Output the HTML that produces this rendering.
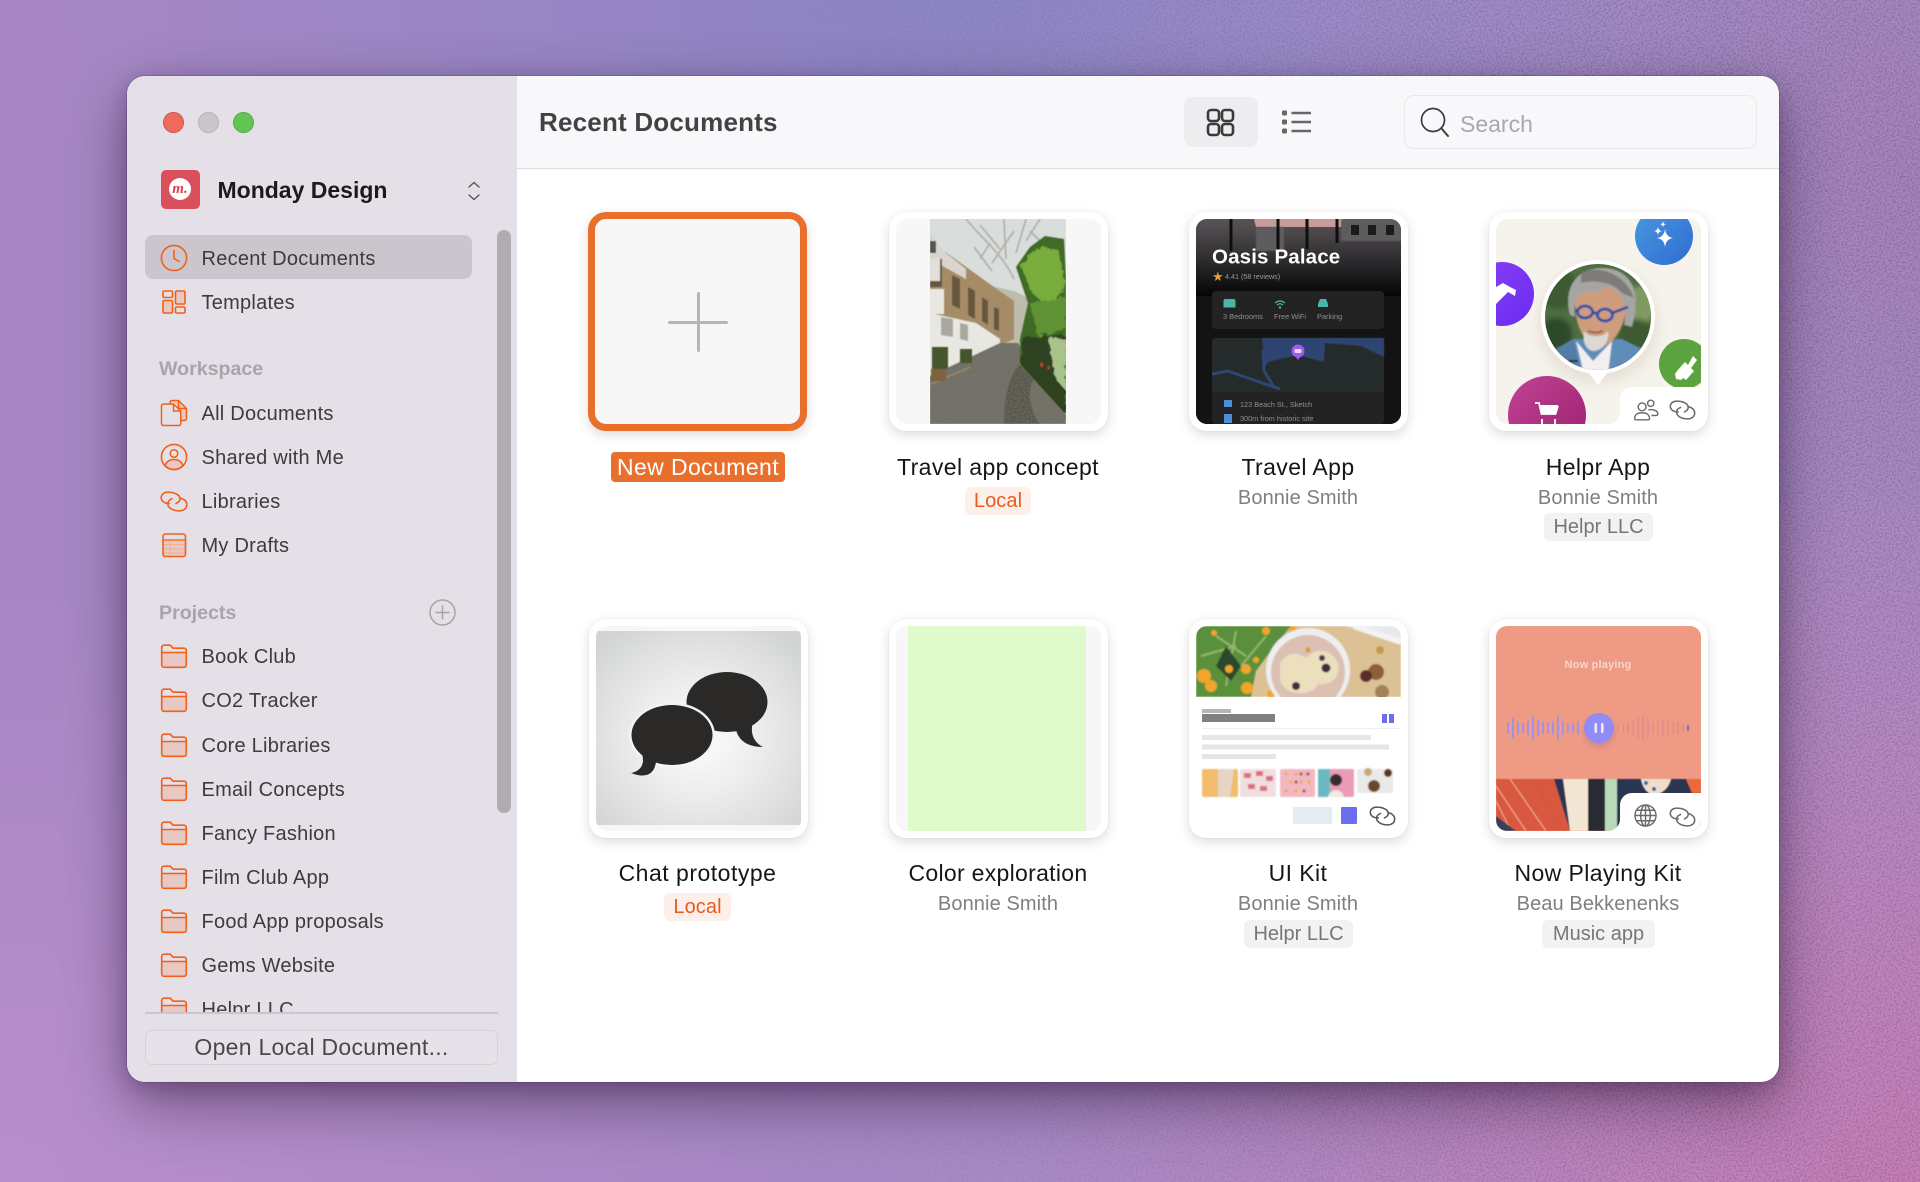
<!DOCTYPE html>
<html><head><meta charset="utf-8"><title>Recent Documents</title>
<style>
html,body{margin:0;padding:0;width:1920px;height:1182px;overflow:hidden;font-family:"Liberation Sans",sans-serif}
body{position:relative;background:
 radial-gradient(900px 420px at 50% 0,#8a83c4 0,rgba(138,131,196,0) 100%),
 radial-gradient(900px 700px at 100% 100%,#c076b2 0,rgba(192,118,178,0) 100%),
 radial-gradient(800px 600px at 0 100%,#b88ecb 0,rgba(184,142,203,0) 100%),
 radial-gradient(700px 600px at 100% 15%,#9c7ab6 0,rgba(156,122,182,0) 100%),
 #a687c4}
div{box-sizing:border-box}
.a{position:absolute}
#noise{position:absolute;left:0;top:0;width:1920px;height:1182px;opacity:.08;-webkit-mask-image:linear-gradient(to right,transparent 35%,#000 85%);mask-image:linear-gradient(to right,transparent 35%,#000 85%)}
#win{position:absolute;left:127px;top:76px;width:1652px;height:1006px;border-radius:18px;background:#fff;box-shadow:0 0 0 1px rgba(70,50,90,.28),0 22px 60px rgba(20,0,30,.42),0 6px 20px rgba(20,0,30,.2);overflow:hidden}
#side{position:absolute;left:0;top:0;width:390px;height:1006px;background:#e5dfe7}
#head{position:absolute;left:390px;top:0;width:1262px;height:93px;background:#f8f8fa;border-bottom:1px solid #dfdfe0;box-shadow:0 1px 1px rgba(0,0,0,.03)}
.r{position:absolute;left:201.5px;margin-top:1px;height:30px;line-height:30px;font-size:20px;letter-spacing:.25px;color:#3d3a40;white-space:nowrap}
.h{position:absolute;left:159px;margin-top:1px;height:30px;line-height:30px;font-size:19.6px;font-weight:bold;color:#a9a4ac;white-space:nowrap}
.ic{position:absolute;left:160px;width:28px;height:28px;overflow:visible}
.card{position:absolute;width:219px;height:219px;background:#fff;border-radius:17px;box-shadow:0 0 1px rgba(0,0,0,.12),0 4px 12px rgba(0,0,0,.14)}
.th{position:absolute;left:7px;top:7px;width:205px;height:205px;border-radius:11px;overflow:hidden;background:#f7f7f7}
.th svg{display:block}
.ti{position:absolute;width:300px;text-align:center;height:30px;line-height:30px;font-size:23px;letter-spacing:.4px;color:#161616;white-space:nowrap}
.au{position:absolute;width:300px;margin-top:1px;text-align:center;height:28px;line-height:28px;font-size:20px;letter-spacing:.1px;color:#7f7f81;white-space:nowrap}
.tg{position:absolute;height:28px;line-height:29px;text-align:center;font-size:20px;border-radius:6px;background:#f2f2f3;color:#77777a;white-space:nowrap}
.lc{background:#fdf0ea;color:#ea5a1c;letter-spacing:.1px}
</style></head><body>
<svg id="noise" xmlns="http://www.w3.org/2000/svg"><filter id="n" x="0" y="0" width="100%" height="100%"><feTurbulence type="fractalNoise" baseFrequency=".55" numOctaves="2"/><feColorMatrix values="5 0 0 0 -2 5 0 0 0 -2 5 0 0 0 -2 0 0 0 0 1"/></filter><rect width="1920" height="1182" filter="url(#n)"/></svg>

<svg width="0" height="0" style="position:absolute"><defs>
<symbol id="folder" viewBox="0 0 28 28"><path d="M1.700 10.500H26.300V23a2.300 2.300 0 0 1-2.300 2.300H4A2.300 2.300 0 0 1 1.700 23Z" fill="#e8c8c3"/><path d="M1.700 10.500H26.300M1.700 23V5.500A2.300 2.300 0 0 1 4 3.200H10.300L13 6.200H24A2.300 2.300 0 0 1 26.300 8.500V23A2.300 2.300 0 0 1 24 25.300H4A2.300 2.300 0 0 1 1.700 23Z" fill="none" stroke="#ef6119" stroke-width="1.600" stroke-linejoin="round"/></symbol>
<symbol id="link" viewBox="0 0 28 21"><path d="M9.500 12.500C4.500 12.500 1.200 10 1.200 6.800 1.200 3.500 4 1.200 8 1.200 13.500 1.200 20 3.400 20 7.800 20 9.800 18.300 11.500 16 12.500M20 7C24 7.800 26.800 10.300 26.800 13.600 26.800 17.500 23.500 19.800 19.500 19.800 13.800 19.800 7.800 17.400 7.800 12.900 7.800 10.500 9.700 8.600 12 7.800" fill="none" stroke="currentColor" stroke-width="1.600" stroke-linecap="round"/></symbol>
</defs></svg>

<div id="win"><div id="side"></div><div id="head"></div></div>

<!-- traffic lights -->
<div class="a" style="left:162.500px;top:112px;width:21px;height:21px;border-radius:50%;background:#ee6a5f;box-shadow:inset 0 0 0 1px #d9584f"></div>
<div class="a" style="left:197.500px;top:112px;width:21px;height:21px;border-radius:50%;background:#cbc6cc;box-shadow:inset 0 0 0 1px #b8b3b9"></div>
<div class="a" style="left:232.500px;top:112px;width:21px;height:21px;border-radius:50%;background:#61c554;box-shadow:inset 0 0 0 1px #55b24a"></div>

<!-- logo -->
<div class="a" style="left:161px;top:170px;width:39px;height:39px;border-radius:5px;background:#d94f5b"></div>
<div class="a" style="left:169px;top:178px;width:22px;height:22px;border-radius:50%;background:#fff;text-align:center;font:italic bold 15px/22px 'Liberation Serif',serif;color:#d8404f">m.</div>
<div class="a" style="left:217.500px;top:175px;height:30px;line-height:30px;font-size:23px;font-weight:bold;color:#1b1a1d;white-space:nowrap">Monday Design</div>
<svg class="a" style="left:467px;top:180px" width="14" height="22" viewBox="0 0 14 22"><path d="M2 7 7 2.500 12 7M2 15 7 19.500 12 15" fill="none" stroke="#5c5a60" stroke-width="1.500" stroke-linecap="round" stroke-linejoin="round"/></svg>

<!-- sidebar selection + scrollbar -->
<div class="a" style="left:145px;top:235px;width:327px;height:44px;border-radius:8px;background:#cbc6cd"></div>
<div class="a" style="left:497px;top:230px;width:14px;height:583px;border-radius:7px;background:#b0abb1"></div>

<!-- sidebar top items -->
<svg class="ic" style="top:243.500px" viewBox="0 0 28 28"><circle cx="14" cy="14" r="12.600" fill="none" stroke="#ef6119" stroke-width="1.600"/><path d="M14 6.500V14.500L19 17.500" fill="none" stroke="#ef6119" stroke-width="1.600" stroke-linecap="round" stroke-linejoin="round"/></svg>
<div class="r" style="top:242.500px">Recent Documents</div>
<svg class="ic" style="top:287.500px" viewBox="0 0 28 28"><g stroke="#ef6119" stroke-width="1.600"><rect x="3" y="3" width="9.500" height="6.500" rx="1.200" fill="none"/><rect x="15.500" y="3" width="9.500" height="13" rx="1.200" fill="#e8c8c3"/><rect x="3" y="12.500" width="9.500" height="12.500" rx="1.200" fill="#e8c8c3"/><rect x="15.500" y="19" width="9.500" height="6" rx="1.200" fill="none"/></g></svg>
<div class="r" style="top:286.500px">Templates</div>

<div class="h" style="top:353px">Workspace</div>
<svg class="ic" style="top:398.500px" viewBox="0 0 28 28"><path d="M11 2h7l8 7v11a2 2 0 0 1-2 2h-3V10l-6-6h-4Z" fill="#e8c8c3"/><path d="M10 5V3.500A2 2 0 0 1 12 1.500H18.500L26.500 9.500V19.500A2 2 0 0 1 24.500 21.500H21M18.500 1.500V9.500H26.500" fill="none" stroke="#ef6119" stroke-width="1.500" stroke-linejoin="round"/><path d="M3.500 5H13.500L20.800 12V24.500A2 2 0 0 1 18.800 26.500H3.500A2 2 0 0 1 1.500 24.500V7A2 2 0 0 1 3.500 5ZM13.500 5V12H20.800" fill="#e5dfe7" stroke="#ef6119" stroke-width="1.500" stroke-linejoin="round"/></svg>
<div class="r" style="top:397.500px">All Documents</div>
<svg class="ic" style="top:442.500px" viewBox="0 0 28 28"><path d="M5 22.500C6.500 18.500 10 16.500 14 16.500S21.500 18.500 23 22.500C20.500 25 17.500 26.500 14 26.500S7.500 25 5 22.500Z" fill="#e8c8c3" stroke="#ef6119" stroke-width="1.500"/><circle cx="14" cy="14" r="12.600" fill="none" stroke="#ef6119" stroke-width="1.600"/><circle cx="14" cy="10.500" r="3.800" fill="none" stroke="#ef6119" stroke-width="1.500"/></svg>
<div class="r" style="top:441.500px">Shared with Me</div>
<svg class="ic" style="top:490.500px;height:21px;color:#ef6119" viewBox="0 0 28 21"><use href="#link"/></svg>
<div class="r" style="top:485.500px">Libraries</div>
<svg class="ic" style="top:530.500px" viewBox="0 0 28 28"><rect x="3" y="3" width="22.500" height="22.500" rx="2.500" fill="#e8c8c3"/><rect x="3" y="3" width="22.500" height="6" fill="#e5dfe7"/><path d="M3 13.500H25.500M3 18H25.500M3 22H25.500M10 9V25.500" stroke="#f2ae91" stroke-width="1" fill="none"/><path d="M3 9H25.500" stroke="#ef6119" stroke-width="1.300"/><rect x="3" y="3" width="22.500" height="22.500" rx="2.500" fill="none" stroke="#ef6119" stroke-width="1.600"/></svg>
<div class="r" style="top:529.500px">My Drafts</div>

<div class="h" style="top:597px">Projects</div>
<svg class="a" style="left:429px;top:599px" width="27" height="27" viewBox="0 0 27 27"><circle cx="13.500" cy="13.500" r="12.500" fill="none" stroke="#a8a4aa" stroke-width="1.500"/><path d="M7 13.500H20M13.500 7V20" stroke="#a8a4aa" stroke-width="1.500" stroke-linecap="round"/></svg>

<!-- folder list, clipped -->
<div class="a" style="left:0;top:630px;width:500px;height:382px;overflow:hidden">
<svg class="ic" style="top:12.300px"><use href="#folder"/></svg><div class="r" style="top:11.300px">Book Club</div>
<svg class="ic" style="top:56.400px"><use href="#folder"/></svg><div class="r" style="top:55.400px">CO2 Tracker</div>
<svg class="ic" style="top:100.500px"><use href="#folder"/></svg><div class="r" style="top:99.500px">Core Libraries</div>
<svg class="ic" style="top:144.600px"><use href="#folder"/></svg><div class="r" style="top:143.600px">Email Concepts</div>
<svg class="ic" style="top:188.700px"><use href="#folder"/></svg><div class="r" style="top:187.700px">Fancy Fashion</div>
<svg class="ic" style="top:232.800px"><use href="#folder"/></svg><div class="r" style="top:231.800px">Film Club App</div>
<svg class="ic" style="top:276.900px"><use href="#folder"/></svg><div class="r" style="top:275.900px">Food App proposals</div>
<svg class="ic" style="top:321px"><use href="#folder"/></svg><div class="r" style="top:320px">Gems Website</div>
<svg class="ic" style="top:365.100px"><use href="#folder"/></svg><div class="r" style="top:364.100px">Helpr LLC</div>
</div>
<div class="a" style="left:145px;top:1012px;width:353px;height:1.500px;background:#cbc6cd"></div>
<div class="a" style="left:145px;top:1030px;width:353px;height:35px;border-radius:7px;background:#e7e2e9;border:1px solid #d6d1d8;text-align:center;line-height:32px;font-size:23px;letter-spacing:.28px;color:#4a474d;white-space:nowrap">Open Local Document...</div>

<!-- header -->
<div class="a" style="left:539px;top:106px;height:32px;line-height:32px;font-size:26px;letter-spacing:.2px;font-weight:bold;color:#424244;white-space:nowrap">Recent Documents</div>
<div class="a" style="left:1184px;top:97px;width:74px;height:50px;border-radius:9px;background:#ededef"></div>
<svg class="a" style="left:1204.500px;top:107px" width="31" height="31" viewBox="0 0 31 31"><g fill="none" stroke="#3a3a3c" stroke-width="2.600"><rect x="3" y="3" width="11" height="11" rx="3"/><rect x="17" y="3" width="11" height="11" rx="3"/><rect x="3" y="17" width="11" height="11" rx="3"/><rect x="17" y="17" width="11" height="11" rx="3"/></g></svg>
<svg class="a" style="left:1280px;top:107px" width="34" height="30" viewBox="0 0 34 30"><g fill="#666668"><rect x="2" y="3.500" width="5" height="5" rx="1.500"/><rect x="2" y="12.500" width="5" height="5" rx="1.500"/><rect x="2" y="21.500" width="5" height="5" rx="1.500"/></g><path d="M11.500 6H31M11.500 15H31M11.500 24H31" stroke="#666668" stroke-width="2.400"/></svg>
<div class="a" style="left:1404px;top:95px;width:353px;height:54px;border-radius:10px;background:#f8f8fa;border:1.500px solid #e9e9eb"></div>
<svg class="a" style="left:1419px;top:106px" width="32" height="32" viewBox="0 0 32 32"><circle cx="14" cy="14" r="11.500" fill="none" stroke="#3c3c3e" stroke-width="1.700"/><path d="M22.500 22.500 29 30" stroke="#3c3c3e" stroke-width="2" stroke-linecap="round"/></svg>
<div class="a" style="left:1460px;top:108.500px;height:30px;line-height:30px;font-size:23px;color:#a9a9ac">Search</div>

<!-- Card 1: New -->
<div class="a" style="left:588px;top:212px;width:219px;height:219px;border-radius:18px;background:#f7f7f7;border:7px solid #e96f2c;box-shadow:0 4px 12px rgba(0,0,0,.14)"></div>
<div class="a" style="left:668px;top:320.500px;width:60px;height:3px;border-radius:2px;background:#b6b6b6"></div>
<div class="a" style="left:696.500px;top:292px;width:3px;height:60px;border-radius:2px;background:#b6b6b6"></div>
<div class="a" style="left:611px;top:452px;width:174px;height:30px;border-radius:4px;background:#e96f2c;text-align:center;line-height:30px;font-size:23px;letter-spacing:.4px;color:#fff;white-space:nowrap">New Document</div>

<!-- Card 2: Travel concept -->
<div class="card" style="left:889px;top:212px"><div class="th">
<svg width="205" height="205" viewBox="0 0 205 205"><defs><filter id="b1" x="-5%" y="-5%" width="110%" height="110%"><feGaussianBlur stdDeviation=".6"/></filter><filter id="rough" x="-10%" y="-10%" width="120%" height="120%"><feTurbulence type="fractalNoise" baseFrequency=".18" numOctaves="3" seed="5"/><feDisplacementMap in="SourceGraphic" scale="7"/><feGaussianBlur stdDeviation=".5"/></filter><filter id="tx" x="0" y="0" width="100%" height="100%"><feTurbulence type="fractalNoise" baseFrequency=".75" numOctaves="2" seed="3"/><feColorMatrix values="0 0 0 0 .2 0 0 0 0 .2 0 0 0 0 .16 0 0 0 1.600 -.55"/><feComposite in2="SourceGraphic" operator="in"/></filter><clipPath id="ph"><rect x="34" width="136" height="205"/></clipPath></defs>
<g clip-path="url(#ph)"><g transform="translate(34 0)">
<rect width="136" height="205" fill="#d9dedd"/>
<g filter="url(#b1)" opacity=".55"><path d="M36 0C52 20 72 34 84 60M74 0 76 40M96 0 86 34M50 6 70 30M84 12 62 44M100 12 116 28M60 24 50 40M44 28 62 52M110 0 96 22" stroke="#8f8878" stroke-width="1.600" fill="none"/></g>
<g filter="url(#b1)">
<path d="M56 66 84 72 100 80 100 125 60 125Z" fill="#bfbbad"/>
<path d="M0 14 14 32 64 68 84 82V120L66 128 0 104Z" fill="#a58c66"/>
<path d="M0 14 16 34 36 50 36 60 0 40Z" fill="#d8d6cc"/>
<path d="M0 22 6 22 6 34 0 34Z" fill="#55544f"/>
<g fill="#65573f"><path d="M0 40H12V68H0Z" /><path d="M22 56 30 60V90L22 86ZM38 68 45 72V100L38 96ZM52 78 58 82V106L52 102ZM64 88 69 90V112L64 110Z"/></g>
<path d="M0 40H10V62H0Z" fill="#e0dfd8"/><path d="M0 70H14V95H0Z" fill="#e8e7e2"/>
<path d="M0 94 46 104 70 120V128L4 156 0 160Z" fill="#e8e7e2"/>
<path d="M11 98 23 100V118L11 116ZM30 104 38 106V122L30 120Z" fill="#a9a8a0"/>
<path d="M0 205V157L70 124H88L136 192V205Z" fill="#6f6e66"/>
<path d="M74 205C74 176 78 160 90 144L104 160C96 172 100 192 110 205Z" fill="#55524a"/>
<path d="M90 144 136 195" stroke="#c3a84a" stroke-width="1.500" fill="none"/>
<path d="M1 165 40 148" stroke="#a8925a" stroke-width="1.300" fill="none"/>
</g>
<path d="M0 205V157L70 124H88L136 192V205Z" filter="url(#tx)"/>
<g filter="url(#b1)">
<path d="M2 128h16v22H2ZM30 130h12v14H30Z" fill="#44572f"/><path d="M1 150h15v12H1Z" fill="#80623f"/>
</g>
<path d="M86 48 100 28 115 17 134 20 136 60V194L90 144 90 120 98 84Z" fill="#3f6a28" filter="url(#b1)"/>
<g filter="url(#rough)">
<path d="M90 46 108 28 128 30 136 68 118 88 102 74Z" fill="#78ac3c"/>
<path d="M100 84 136 78 136 110 108 118Z" fill="#5f9234"/>
<path d="M92 118 136 116V196L90 145Z" fill="#2e4223"/>
<path d="M118 118 136 120V172L126 160Z" fill="#a9c28a"/>
<circle cx="112" cy="146" r="2" fill="#b8482a"/><circle cx="118" cy="148" r="1.500" fill="#b8482a"/>
</g>
</g></g>
</svg></div></div>
<div class="ti" style="left:848px;top:452px">Travel app concept</div>
<div class="tg lc" style="left:965px;top:487px;width:66px">Local</div>

<!-- Card 3: Travel App -->
<div class="card" style="left:1189px;top:212px"><div class="th" style="background:#131313">
<svg width="205" height="205" viewBox="0 0 205 205" font-family="Liberation Sans,sans-serif"><defs><linearGradient id="sk" x1="0" y1="0" x2="0" y2="1"><stop offset="0" stop-color="#5a5458"/><stop offset=".55" stop-color="#2c2a2d"/><stop offset="1" stop-color="#050505"/></linearGradient><filter id="b2"><feGaussianBlur stdDeviation=".5"/></filter></defs>
<rect width="205" height="77" fill="url(#sk)"/>
<path d="M58 0H148L152 8H60Z" fill="#c89a9a"/>
<path d="M145 0h60v22h-60zM60 8h28v24H60z" fill="#5e5c5e" filter="url(#b2)"/>
<g stroke="#0e0e0e" stroke-width="3"><path d="M35 0V32M82 0V32M111 0V30M141 0V24"/></g>
<g fill="#1b1b1b"><rect x="155" y="6" width="8" height="10"/><rect x="172" y="6" width="8" height="10"/><rect x="190" y="6" width="8" height="10"/></g>
<rect y="77" width="205" height="128" fill="#131313"/>
<text x="16" y="44.500" font-size="20.500" font-weight="bold" fill="#fff" letter-spacing=".15">Oasis Palace</text>
<text x="16" y="62" font-size="13" fill="#e7a12a">★</text>
<text x="29" y="60" font-size="7.200" fill="#9a9a9a">4.41 (58 reviews)</text>
<rect x="16" y="72" width="172" height="38" rx="4" fill="#232323"/>
<path d="M28 88v-6a1.500 1.500 0 0 1 1.500-1.500h8a1.500 1.500 0 0 1 1.500 1.500v6ZM28 85h11" fill="#4cb5a8" stroke="#4cb5a8"/>
<path d="M79 84q5-4 10 0M81 86q3-2.500 6 0" stroke="#4cb5a8" stroke-width="1.300" fill="none"/><circle cx="84" cy="88.500" r="1.200" fill="#4cb5a8"/>
<path d="M122 88v-3l2-5h6l2 5v3Z" fill="#4cb5a8"/>
<text x="27" y="100" font-size="7.400" fill="#8f8f8f">3 Bedrooms</text><text x="78" y="100" font-size="7.400" fill="#8f8f8f">Free WiFi</text><text x="121" y="100" font-size="7.400" fill="#8f8f8f">Parking</text>
<rect x="16" y="119" width="172" height="86" rx="4" fill="#232323"/>
<path d="M16 123a4 4 0 0 1 4-4H188V173H16Z" fill="#252a2b"/>
<path d="M66 119H188V138L165 127 129 124 128 143 102 136 72 143 68 150 67 130Z" fill="#2f4573" filter="url(#b2)"/>
<path d="M16 155 32 152 46 157 84 170M67 130 68 152 78 168" fill="none" stroke="#2f4573" stroke-width="3"/>
<circle cx="102" cy="132" r="6.500" fill="#9b5de5"/><path d="M99 137 102 141 105 137Z" fill="#9b5de5"/><rect x="98.500" y="130" width="7" height="4" rx="1" fill="#e6d6fb"/>
<rect x="28" y="181" width="8" height="7" fill="#4a90d9"/><rect x="28" y="195" width="8" height="9" fill="#4a90d9"/>
<text x="44" y="188" font-size="7.300" fill="#8f8f8f">123 Beach St., Sketch</text><text x="44" y="202" font-size="7.300" fill="#8f8f8f">300m from historic site</text>
</svg></div></div>
<div class="ti" style="left:1148px;top:452px">Travel App</div>
<div class="au" style="left:1148px;top:483px">Bonnie Smith</div>

<!-- Card 4: Helpr -->
<div class="card" style="left:1489px;top:212px"><div class="th" style="background:#f6f3ec">
<svg width="205" height="205" viewBox="0 0 205 205"><defs><linearGradient id="bl" x1="0" y1="0" x2="1" y2="1"><stop offset="0" stop-color="#4a9ae2"/><stop offset="1" stop-color="#2f6bd0"/></linearGradient><linearGradient id="pu" x1="0" y1="0" x2="1" y2="1"><stop offset="0" stop-color="#8a3ff5"/><stop offset="1" stop-color="#6a2cf0"/></linearGradient><linearGradient id="mg" x1="0" y1="0" x2="1" y2="1"><stop offset="0" stop-color="#c04494"/><stop offset="1" stop-color="#9c1f6f"/></linearGradient><clipPath id="pc"><circle cx="102" cy="98" r="53"/></clipPath><filter id="b3"><feGaussianBlur stdDeviation="2.500"/></filter><filter id="b4"><feGaussianBlur stdDeviation=".9"/></filter><filter id="sh"><feGaussianBlur stdDeviation="6"/></filter></defs>
<circle cx="168" cy="17" r="29" fill="url(#bl)"/>
<path d="M169 10q1 8 8 9-7 1-8 9-1-8-8-9 7-1 8-9ZM162 8q.5 3.500 4 4-3.500.5-4 4-.5-3.500-4-4 3.500-.5 4-4ZM167 2.500l.8 2 2 .8-2 .8-.8 2-.8-2-2-.8 2-.8Z" fill="#fff"/>
<circle cx="6" cy="75" r="32" fill="url(#pu)"/>
<path d="M0 68 7 64 14 68 20 71 19 77 12 73 8 77 0 85Z" fill="#fff"/>
<circle cx="188" cy="145" r="25" fill="#5aa33f"/>
<path d="M181 152 189 143 192 146 197 137 201 141 195 149 198 152 190 161 187 159 185 161 180 160 179 155Z" fill="#fff"/>
<circle cx="51" cy="196" r="39" fill="url(#mg)"/>
<path d="M39 184h4l2.500 11h14l2.500-8M46 200v5M59 200v5" fill="none" stroke="#fff" stroke-width="1.800"/><path d="M44 186H62L60 195H46Z" fill="#fff"/>
<circle cx="102" cy="105" r="60" fill="#cfc8b6" opacity=".4" filter="url(#sh)"/>
<path d="M90 150 102 166 114 150Z" fill="#fff"/>
<circle cx="102" cy="98" r="57" fill="#fff"/>
<g clip-path="url(#pc)"><rect x="45" y="40" width="115" height="115" fill="#4f6d42"/>
<g filter="url(#b3)"><circle cx="62" cy="70" r="20" fill="#3c5a33"/><circle cx="145" cy="85" r="18" fill="#7f9a60"/><circle cx="140" cy="118" r="18" fill="#3e5a33"/><circle cx="60" cy="115" r="16" fill="#2f4a2c"/></g>
<g filter="url(#b4)"><path d="M50 155 56 132 78 120 126 120 146 130 152 155Z" fill="#5f8cb8"/><path d="M80 122 97 142 116 122 112 155H88Z" fill="#f1f0ee"/><path d="M60 130 78 122 84 150 66 155Z" fill="#527da8"/><path d="M82 142h-8l-2 12" stroke="#222" stroke-width="2" fill="none"/>
<g transform="translate(0 4)"><path d="M79 80C79 62 88 54 104 54S130 62 130 82C130 104 116 124 103 124S79 104 79 80Z" fill="#cf9c7d"/>
<path d="M88 108C92 115 108 115 112 108 114 118 106 128 98 128S86 118 88 108Z" fill="#dcd9d4"/>
<path d="M74 92C66 60 85 45 106 45 130 45 148 62 136 104L128 102C132 82 126 68 112 64 98 72 87 67 82 73 78 80 78 86 79 94Z" fill="#a7a5a3"/>
<path d="M85 50C100 42 128 48 138 75L126 70C118 60 100 56 85 60Z" fill="#7e7c7a"/>
<g fill="none" stroke="#2f4fa8" stroke-width="2.800"><ellipse cx="89" cy="89" rx="7.500" ry="6"/><ellipse cx="109" cy="92" rx="7.500" ry="6"/><path d="M96 89 102 91M116 90 132 84M82 88 79 87"/></g>
<path d="M92 108q8 3 15 0" stroke="#7f5345" stroke-width="1.600" fill="none"/></g></g>
</g>
<path d="M205 168H136a12 12 0 0 0-12 12V193a12 12 0 0 1-12 12H205Z" fill="#fff"/>
</svg></div>
<svg class="a" style="left:144px;top:187px" width="26" height="22" viewBox="0 0 32 28"><g fill="none" stroke="#69696b" stroke-width="1.800"><circle cx="11" cy="10" r="5"/><path d="M1.500 25C1.500 20 5.500 17.500 11 17.500S20.500 20 20.500 25C20.500 26 19.500 26.500 18.500 26.500H3.500C2.500 26.500 1.500 26 1.500 25Z"/><circle cx="22" cy="5.500" r="4"/><path d="M19 14C24 12.500 31 14.500 31 19 31 20.500 30 21 29 21H23"/></g></svg>
<svg class="a" style="left:180px;top:188px;color:#69696b" width="27" height="20" viewBox="0 0 28 21"><use href="#link"/></svg>
</div>
<div class="ti" style="left:1448px;top:452px">Helpr App</div>
<div class="au" style="left:1448px;top:483px">Bonnie Smith</div>
<div class="tg" style="left:1544px;top:513px;width:109px">Helpr LLC</div>

<!-- Card 5: Chat -->
<div class="card" style="left:589px;top:619px"><div class="th">
<svg width="205" height="205" viewBox="0 0 205 205"><defs><radialGradient id="cg" cx=".5" cy=".55" r=".68"><stop offset="0" stop-color="#fdfdfd"/><stop offset=".45" stop-color="#ececec"/><stop offset="1" stop-color="#d2d4d4"/></radialGradient></defs>
<rect y="5" width="205" height="194" fill="url(#cg)"/>
<g fill="#2a2927"><ellipse cx="131" cy="76" rx="40.500" ry="30"/><path d="M140 104C143 115 152 121 167 121 157 116 154 106 157 96Z"/>
<ellipse cx="76" cy="109" rx="43" ry="32.500" fill="#f4f4f4"/><ellipse cx="76" cy="109" rx="40.500" ry="30"/><path d="M46 128C49 138 45 145 35 147 48 152 58 150 60 136Z"/></g>
</svg></div></div>
<div class="ti" style="left:547.500px;top:858px;letter-spacing:.5px">Chat prototype</div>
<div class="tg lc" style="left:664px;top:893px;width:67px">Local</div>

<!-- Card 6: Color -->
<div class="card" style="left:889px;top:619px"><div class="th"><div class="a" style="left:12px;top:0;width:178px;height:205px;background:#e0fbcb"></div></div></div>
<div class="ti" style="left:848px;top:858px;letter-spacing:.3px">Color exploration</div>
<div class="au" style="left:848px;top:889px">Bonnie Smith</div>

<!-- Card 7: UI Kit -->
<div class="card" style="left:1189px;top:619px"><div class="th" style="background:#fff">
<svg width="205" height="205" viewBox="0 0 205 205"><defs><filter id="b5"><feGaussianBlur stdDeviation=".8"/></filter><clipPath id="cp7"><rect width="205" height="71"/></clipPath></defs>
<g clip-path="url(#cp7)"><g filter="url(#b5)"><rect width="205" height="71" fill="#dcc195"/>
<path d="M0 0H95L75 25 60 45 55 71H0Z" fill="#5a8f3a"/>
<path d="M20 10 50 30M5 30 40 20M40 5 30 60M70 10 45 40" stroke="#93b870" stroke-width="2"/>
<path d="M30 20 45 40 35 55 20 40Z" fill="#2c4a2a"/>
<g fill="#f0a62a"><circle cx="8" cy="50" r="7"/><circle cx="15" cy="60" r="6"/><circle cx="50" cy="43" r="5"/><circle cx="51" cy="62" r="6"/><circle cx="70" cy="5" r="4"/><circle cx="18" cy="7" r="3"/><circle cx="97" cy="4" r="4"/><circle cx="60" cy="34" r="3"/><circle cx="75" cy="68" r="4"/><circle cx="33" cy="43" r="4"/></g>
<circle cx="112" cy="44" r="42" fill="#eeeef1"/><circle cx="112" cy="46" r="37" fill="#dcc0b4"/>
<path d="M84 38C88 28 100 24 110 32 120 20 138 24 142 38 145 52 134 60 122 58 116 72 88 70 84 54Z" fill="#ecdfbd"/>
<circle cx="130" cy="42" r="4.500" fill="#3a2d40"/><circle cx="100" cy="60" r="4" fill="#3a2d40"/><circle cx="126" cy="32" r="3" fill="#4c3a50"/><circle cx="112" cy="24" r="2.500" fill="#d99a2a"/>
<path d="M150 0H205V16Z" fill="#e9e9ec"/><path d="M158 0 205 16" stroke="#f3f3f5" stroke-width="6"/>
<circle cx="180" cy="46" r="8" fill="#8a5f3a"/><circle cx="170" cy="50" r="6" fill="#5a2f2a"/><circle cx="186" cy="66" r="7" fill="#a2805a"/><circle cx="184" cy="24" r="4" fill="#c49a4a"/></g></g>
<rect x="6" y="83" width="29" height="4" fill="#b5b5b5"/><rect x="6" y="88" width="73" height="8" fill="#808080"/>
<rect x="186" y="88" width="5" height="9" fill="#6a6ff0"/><rect x="193" y="88" width="5" height="9" fill="#6a6ff0"/>
<rect x="6" y="102" width="199" height="1" fill="#ebeff8"/>
<rect x="6" y="109" width="169" height="5" fill="#e6e6e6"/><rect x="6" y="118.500" width="187" height="5" fill="#e6e6e6"/><rect x="6" y="128" width="74" height="5" fill="#e6e6e6"/>
<g filter="url(#b5)"><rect x="6" y="143" width="36" height="28" rx="2" fill="#f1bd6d"/><path d="M22 143h16l-4 28H22Z" fill="#e7d4c4"/>
<rect x="44" y="143" width="36" height="28" rx="2" fill="#f0dfe0"/><g fill="#dc6f82"><rect x="48" y="147" width="7" height="5"/><rect x="60" y="145" width="7" height="5"/><rect x="70" y="150" width="7" height="5"/><rect x="52" y="158" width="7" height="5"/><rect x="64" y="160" width="7" height="5"/></g>
<rect x="84" y="143" width="35" height="28" rx="2" fill="#f3b7c0"/><g fill="#d8b23f"><circle cx="90" cy="148" r="1.500"/><circle cx="100" cy="148" r="1.500"/><circle cx="110" cy="148" r="1.500"/><circle cx="95" cy="156" r="1.500"/><circle cx="105" cy="156" r="1.500"/><circle cx="113" cy="156" r="1.500"/><circle cx="90" cy="165" r="1.500"/><circle cx="100" cy="165" r="1.500"/></g><g fill="#8a3f7a"><circle cx="112" cy="148" r="1.500"/><circle cx="105" cy="148" r="1.500"/><circle cx="100" cy="156" r="1.500"/><circle cx="108" cy="165" r="1.500"/></g>
<rect x="122" y="143" width="36" height="28" rx="2" fill="#e89cb8"/><rect x="122" y="143" width="12" height="28" fill="#6bb9c0"/><circle cx="140" cy="154" r="6" fill="#3a2a2a"/><path d="M132 171C134 162 146 162 148 171Z" fill="#f1e9e4"/>
<rect x="161" y="143" width="36" height="24" rx="2" fill="#e9e9e8"/><circle cx="178" cy="160" r="6" fill="#6a4a2a"/><circle cx="192" cy="147" r="4" fill="#5a3020"/><circle cx="172" cy="146" r="4" fill="#c9a97a"/></g>
<rect x="97" y="181" width="39" height="17" rx="2" fill="#e6eaf3"/><rect x="145" y="181" width="16" height="17" rx="1" fill="#6a6ff0"/>
</svg></div>
<svg class="a" style="left:180px;top:187px;color:#55555a" width="27" height="20" viewBox="0 0 28 21"><use href="#link"/></svg>
</div>
<div class="ti" style="left:1148px;top:858px">UI Kit</div>
<div class="au" style="left:1148px;top:889px">Bonnie Smith</div>
<div class="tg" style="left:1244px;top:920px;width:109px">Helpr LLC</div>

<!-- Card 8: Now Playing -->
<div class="card" style="left:1489px;top:619px"><div class="th" style="background:#ee9a84">
<svg width="205" height="205" viewBox="0 0 205 205" font-family="Liberation Sans,sans-serif"><defs><filter id="b6"><feGaussianBlur stdDeviation="3"/></filter><filter id="b7"><feGaussianBlur stdDeviation=".5"/></filter></defs>
<text x="102" y="42" text-anchor="middle" font-size="11" font-weight="bold" fill="#f8d5cb" letter-spacing=".2">Now playing</text>
<g stroke="#9a92ee" stroke-width="1.800" stroke-linecap="round">
<path d="M12 97v10M17 92v20M22 96v12M27 98v8M32 96v12M37 90v24M42 94v16M47 97v10M52 97v10M57 96v12M62 91v22M67 96v12M72 98v8M77 98v8M82 96v12"/></g>
<g stroke="#e28f8a" stroke-width="1.800" stroke-linecap="round">
<path d="M122 98v8M127 98v8M132 97v10M137 96v12M142 92v20M147 90v24M152 94v16M157 97v10M162 96v12M167 94v16M172 96v12M177 97v10M182 97v10M187 98v8"/></g>
<path d="M192 99v6" stroke="#8d7aa8" stroke-width="2.500"/>
<circle cx="103" cy="106" r="15" fill="#9a6a90" opacity=".35" filter="url(#b6)"/>
<circle cx="103" cy="102" r="15" fill="#8f8cf5"/>
<rect x="98.500" y="97" width="2.500" height="10" rx="1" fill="#f1e9fb"/><rect x="105" y="97" width="2.500" height="10" rx="1" fill="#f1e9fb"/>
<g filter="url(#b7)"><rect y="153" width="205" height="52" fill="#29344f"/>
<path d="M0 153H36L68 205H0Z" fill="#d9593f"/>
<path d="M0 160 30 205M0 175 15 205M14 153 50 205" stroke="#f0a08e" stroke-width="1.200" fill="none"/>
<path d="M36 153H58L74 205H68Z" fill="#d9593f"/>
<path d="M0 190 20 205H0Z" fill="#34405c"/>
<path d="M67 153H94V205H74Z" fill="#f3e6d4"/>
<rect x="92" y="153" width="17" height="52" fill="#2b2c30"/>
<path d="M109 153H121V205H109Z" fill="#b9d9b8"/>
<path d="M145 153H175C172 166 160 170 155 168 150 166 146 160 145 153Z" fill="#f0dccc"/>
<circle cx="150" cy="157" r="2" fill="#2d6db3"/><circle cx="158" cy="163" r="2" fill="#2d6db3"/>
<path d="M190 153H205V167H196Z" fill="#ea6b3b"/></g>
<path d="M205 167H136a12 12 0 0 0-12 12V193a12 12 0 0 1-12 12H205Z" fill="#fff"/>
</svg></div>
<svg class="a" style="left:145px;top:185px" width="23" height="23" viewBox="0 0 24 24"><g fill="none" stroke="#69696b" stroke-width="1.500"><circle cx="12" cy="12" r="11"/><ellipse cx="12" cy="12" rx="5" ry="11"/><path d="M12 1V23M1 12H23M2.800 6.500H21.200M2.800 17.500H21.200"/></g></svg>
<svg class="a" style="left:180px;top:188px;color:#69696b" width="27" height="20" viewBox="0 0 28 21"><use href="#link"/></svg>
</div>
<div class="ti" style="left:1448px;top:858px">Now Playing Kit</div>
<div class="au" style="left:1448px;top:889px">Beau Bekkenenks</div>
<div class="tg" style="left:1542px;top:920px;width:113px">Music app</div>
</body></html>
